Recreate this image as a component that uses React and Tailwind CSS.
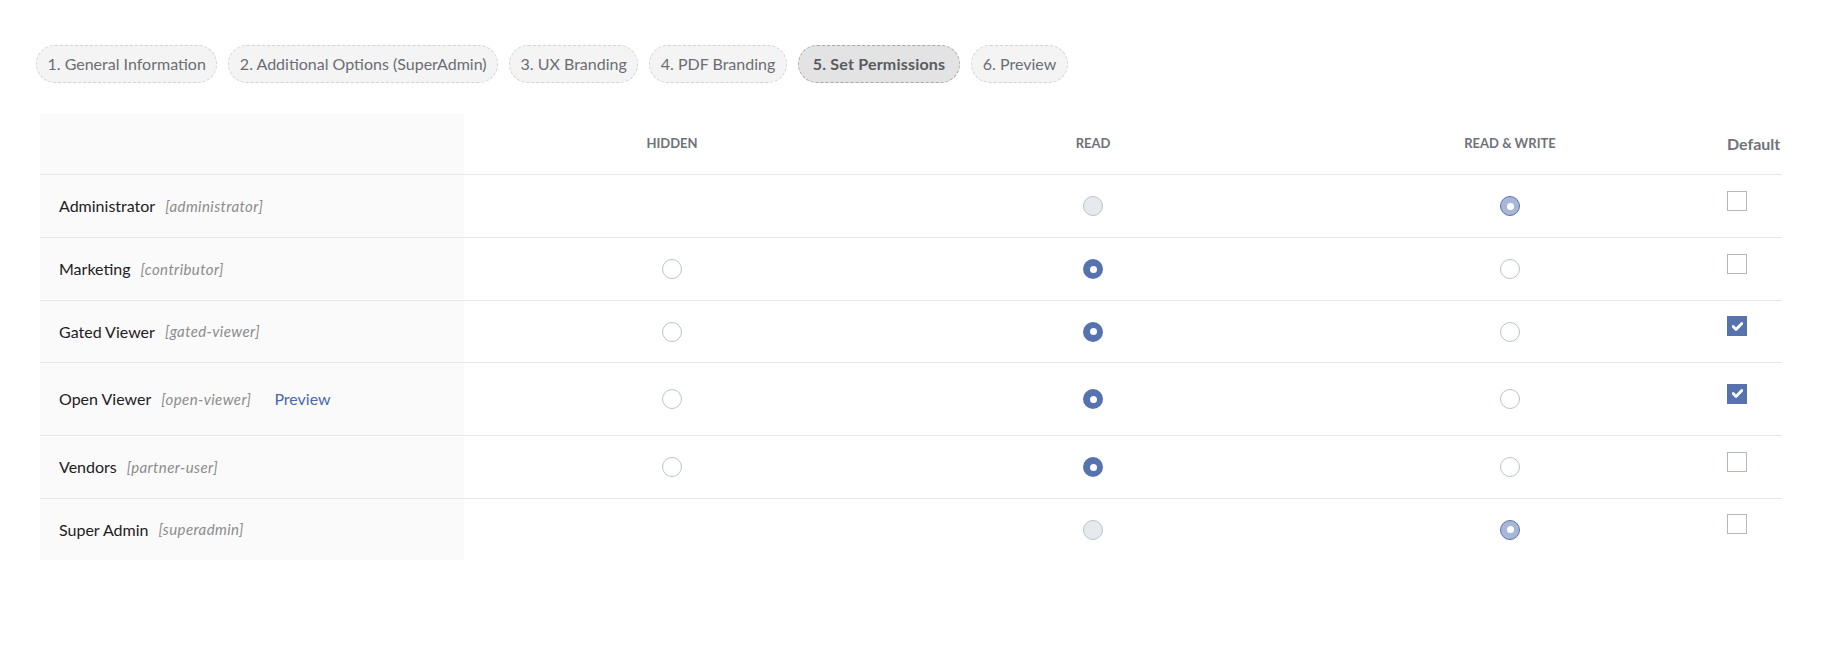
import { useState } from 'react'

const STEPS = [
  '1. General Information',
  '2. Additional Options (SuperAdmin)',
  '3. UX Branding',
  '4. PDF Branding',
  '5. Set Permissions',
  '6. Preview',
]

const ROLES = [
  { name: 'Administrator', slug: 'administrator', level: 'write', locked: true, def: false, h: 'h-[63px]' },
  { name: 'Marketing', slug: 'contributor', level: 'read', def: false, h: 'h-[63px]' },
  { name: 'Gated Viewer', slug: 'gated-viewer', level: 'read', def: true, h: 'h-[62px]' },
  { name: 'Open Viewer', slug: 'open-viewer', level: 'read', def: true, preview: true, h: 'h-[73px]' },
  { name: 'Vendors', slug: 'partner-user', level: 'read', def: false, h: 'h-[63px]' },
  { name: 'Super Admin', slug: 'superadmin', level: 'write', locked: true, def: false, h: 'h-[62px]' },
]

const GRID = 'grid grid-cols-[424px_416px_426px_408px_1fr]'

function Radio({ checked, disabled, onClick }) {
  if (disabled) {
    return checked ? (
      <span className="w-5 h-5 rounded-full bg-[#a9b7d6] border border-[#5a76b0] flex items-center justify-center">
        <span className="w-[7px] h-[7px] rounded-full bg-white" />
      </span>
    ) : (
      <span className="w-5 h-5 rounded-full bg-[#e6e9ee] border border-[#bcc2ca]" />
    )
  }
  return checked ? (
    <button onClick={onClick} className="w-5 h-5 rounded-full bg-[#5673b0] flex items-center justify-center">
      <span className="w-[7px] h-[7px] rounded-full bg-white" />
    </button>
  ) : (
    <button onClick={onClick} className="w-5 h-5 rounded-full bg-white border border-[#bcc2ca]" />
  )
}

function Checkbox({ checked, onClick }) {
  return checked ? (
    <button onClick={onClick} className="w-5 h-5 bg-[#5673b0] flex items-center justify-center mb-[11px]">
      <svg width="11" height="9" viewBox="0 0 11 9">
        <path d="M1.2 4.6 L4 7.4 L9.8 1.6" fill="none" stroke="white" strokeWidth="2.8" strokeLinecap="round" strokeLinejoin="round" />
      </svg>
    </button>
  ) : (
    <button onClick={onClick} className="w-5 h-5 bg-white border-[1.5px] border-[#b3b8c0] mb-[11px]" />
  )
}

export default function App() {
  const [roles, setRoles] = useState(ROLES)
  const update = (slug, patch) => setRoles(rs => rs.map(r => r.slug === slug ? { ...r, ...patch } : r))

  return (
    <div className="min-h-screen bg-white font-['Lato','Liberation_Sans',sans-serif] pt-[45px] pl-[36px]">
      {/* steps */}
      <div className="flex gap-[11px]">
        {STEPS.map((s, i) => (
          <div key={s}
            className={`h-[38px] flex items-center rounded-[19px] border border-dashed text-[16px] whitespace-nowrap
              ${i === 4 ? 'px-[14px] bg-[#e3e3e3] border-[#a9a9a9] text-[#585b60] font-bold tracking-[0.2px]' : 'px-[10.5px] bg-[#f4f4f4] border-[#d3d3d3] text-[#6b6e73]'}`}>
            {s}
          </div>
        ))}
      </div>

      {/* permissions table */}
      <div className="mt-[31px] ml-[4px] w-[1742px]">
        <div className={`${GRID} h-[60px] items-center text-[#6f7279]`}>
          <div className="h-full bg-[#fafafa]" />
          <div className="text-center text-[13px] font-bold">HIDDEN</div>
          <div className="text-center text-[13px] font-bold">READ</div>
          <div className="text-center text-[13px] font-bold">READ &amp; WRITE</div>
          <div className="pl-[13px] text-[16px] font-bold">Default</div>
        </div>

        {roles.map(r => (
          <div key={r.slug} className={`${GRID} ${r.h} border-t border-[#e7e7e7]`}>
            <div className="bg-[#fafafa] flex items-center pl-[19px]">
              <span className="text-[16px] text-[#1e2024]">{r.name}</span>
              <span className="ml-[10px] text-[15px] italic tracking-[0.4px] text-[#8c8c8c]">[{r.slug}]</span>
              {r.preview && <a className="ml-[23px] text-[16px] text-[#4a69a8] cursor-pointer">Preview</a>}
            </div>
            <div className="flex items-center justify-center">
              {!r.locked && <Radio checked={r.level === 'hidden'} onClick={() => update(r.slug, { level: 'hidden' })} />}
            </div>
            <div className="flex items-center justify-center">
              <Radio checked={r.level === 'read'} disabled={r.locked} onClick={() => update(r.slug, { level: 'read' })} />
            </div>
            <div className="flex items-center justify-center">
              <Radio checked={r.level === 'write'} disabled={r.locked} onClick={() => update(r.slug, { level: 'write' })} />
            </div>
            <div className="flex items-center pl-[13px]">
              <Checkbox checked={r.def} onClick={() => update(r.slug, { def: !r.def })} />
            </div>
          </div>
        ))}
      </div>
    </div>
  )
}
